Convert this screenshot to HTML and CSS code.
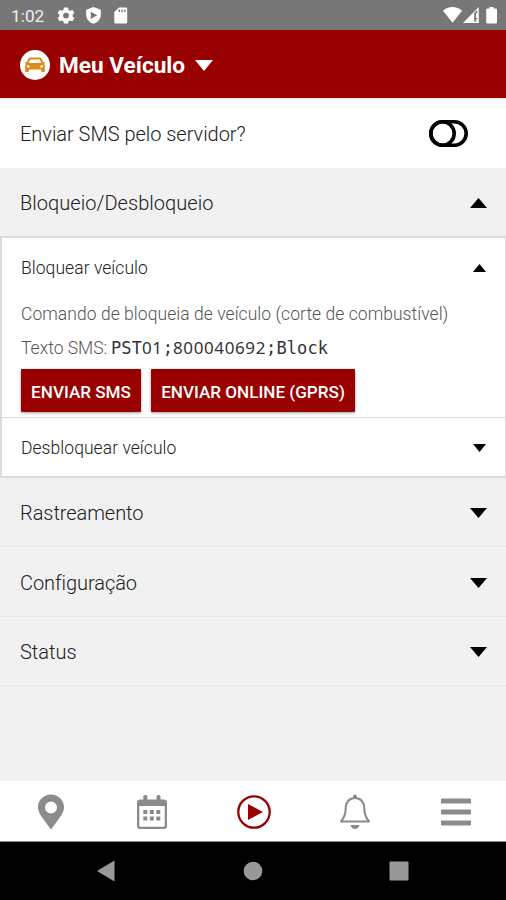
FILE: index.html
```html
<!DOCTYPE html>
<html lang="pt-BR">
<head>
<meta charset="utf-8">
<title>Meu Veículo</title>
<link rel="stylesheet" href="styles.css">
</head>
<body>
<div class="status-bar">
  <span class="time">1:02</span>
  <svg class="status-left" viewBox="0 0 75 30" width="75" height="30" fill="#fff">
    <path fill-rule="evenodd" d="M8 7.500h4l.6 2.400 1.500.9 2.400-.8 1.900 3.100-1.800 1.700v1.600l1.800 1.600-1.900 3.200-2.400-.8-1.500.9-.6 2.300H8l-.6-2.300-1.500-.9-2.400.8L1.600 18l1.800-1.600v-1.600l-1.800-1.700L3.500 10l2.400.8 1.500-.9zM10 12.700a2.900 2.900 0 1 0 0 5.800a2.900 2.900 0 1 0 0-5.800z"/>
    <path fill-rule="evenodd" d="M37.500 7l7.300 2.800v5.200c0 4.300-3.200 7.500-7.300 8.800c-4.100-1.300-7.300-4.500-7.300-8.800V9.800zM34.800 11.700v7.200l6.400-3.600z"/>
    <path fill-rule="evenodd" d="M63 7.500h7a1.200 1.200 0 0 1 1.200 1.200v13.600a1.200 1.200 0 0 1-1.200 1.200H59.500a1.200 1.200 0 0 1-1.200-1.200V12zM62.500 9.500v2.500H64v-2.500zM65.300 9.500v2.500h1.400v-2.500zM68.200 9.500v2.500h1.400v-2.500z"/>
  </svg>
  <svg class="status-right" viewBox="0 0 60 30" width="60" height="30" fill="#fff">
    <path d="M3 10.800c5-5 14-5 19 0L12.500 22.800z"/>
    <path fill-rule="evenodd" d="M38.800 7v16H23zM34.200 13v8.500h3V10z"/>
    <path d="M36 13h1.600v5H36zM36 19.500h1.600V21H36z"/>
    <path d="M49.500 7h4v1.500h2.200a1.300 1.300 0 0 1 1.300 1.300v12.400a1.300 1.300 0 0 1-1.300 1.300h-8.200a1.300 1.300 0 0 1-1.300-1.300V9.800a1.300 1.300 0 0 1 1.300-1.300h2z"/>
  </svg>
</div>
<header class="header">
  <svg class="avatar" viewBox="0 0 30 30" width="30" height="30">
    <circle cx="15" cy="15" r="15" fill="#fff"/>
    <path fill="#dc8d1b" fill-rule="evenodd" d="M10.500 7.500h9c1.300 0 2 .6 2.500 1.700l1.400 3.200 1.600-.6v1.300l-1 .7c.6.7.9 1.500.9 2.400v4.600c0 .9-.4 1.300-1.200 1.300h-1.200c-.9 0-1.400-.5-1.400-1.300v-1.300H8.900v1.300c0 .8-.5 1.300-1.400 1.300H6.300c-.8 0-1.200-.4-1.200-1.300v-4.600c0-.9.300-1.700.9-2.400l-1-.7v-1.300l1.600.6L8 9.200c.5-1.100 1.200-1.700 2.500-1.700zM10.800 9.500c-.6 0-.8.200-1 .7l-1.100 2.700h12.600l-1.100-2.700c-.2-.5-.4-.7-1-.7zM7 15v2.200l3 .4c0-1.500-1.200-2.600-3-2.600zM23 15v2.200l-3 .4c0-1.500 1.200-2.600 3-2.600z"/>
  </svg>
  <h1 class="title">Meu Veículo</h1>
  <svg class="title-caret" viewBox="0 0 18 11" width="18" height="11"><path fill="#fff" d="M0 0h18L9 11z"/></svg>
</header>
<main class="content">
  <div class="row setting">
    <span class="label-server">Enviar SMS pelo servidor?</span>
    <svg class="toggle" viewBox="0 0 39 27" width="39" height="27" fill="none" stroke="#000" stroke-width="3.600">
      <rect x="1.800" y="1.800" width="35.400" height="23.400" rx="11.700"/>
      <circle cx="13.500" cy="13.500" r="11.700"/>
    </svg>
  </div>
  <div class="row section open">
    <span class="label-block">Bloqueio/Desbloqueio</span>
    <svg viewBox="0 0 17 10" width="17" height="10"><path d="M0 10h17L8.500 0z"/></svg>
  </div>
  <div class="panel">
    <div class="command">
      <div class="command-head">
        <span class="label-lock">Bloquear veículo</span>
        <svg viewBox="0 0 13 8" width="13" height="8"><path d="M0 8h13L6.500 0z"/></svg>
      </div>
      <p class="description">Comando de bloqueia de veículo (corte de combustível)</p>
      <p class="sms"><span class="sms-label">Texto SMS:</span><code>PST<span class="digits">01</span>;<span class="digits">800040692</span>;Block</code></p>
      <div class="actions">
        <button class="btn btn-sms">ENVIAR SMS</button>
        <button class="btn btn-online">ENVIAR ONLINE (GPRS)</button>
      </div>
    </div>
    <div class="command-head last">
      <span class="label-unlock">Desbloquear veículo</span>
      <svg viewBox="0 0 13 8" width="13" height="8"><path d="M0 0h13L6.500 8z"/></svg>
    </div>
  </div>
  <div class="row section closed">
    <span class="label-track">Rastreamento</span>
    <svg viewBox="0 0 17 10" width="17" height="10"><path d="M0 0h17L8.500 10z"/></svg>
  </div>
  <div class="row section closed tall">
    <span class="label-config">Configuração</span>
    <svg viewBox="0 0 17 10" width="17" height="10"><path d="M0 0h17L8.500 10z"/></svg>
  </div>
  <div class="row section closed">
    <span class="label-status">Status</span>
    <svg viewBox="0 0 17 10" width="17" height="10"><path d="M0 0h17L8.500 10z"/></svg>
  </div>
</main>
<nav class="tabs">
  <svg viewBox="0 0 36 36" width="36" height="36"><path fill="#8b8b8b" fill-rule="evenodd" d="M18 .5c7.300 0 13 5.600 13 12.700c0 6.500-6.500 13-13 22.300C11.500 26.200 5 19.700 5 13.200C5 6.100 10.700.5 18 .5zM18 7.500a6 6 0 1 0 0 12a6 6 0 1 0 0-12z"/></svg>
  <svg viewBox="0 0 36 36" width="36" height="36" fill="#8b8b8b">
    <path fill-rule="evenodd" d="M6 5.500h24a3 3 0 0 1 3 3V32a3 3 0 0 1-3 3H6a3 3 0 0 1-3-3V8.500a3 3 0 0 1 3-3zM5.300 12v19.500c0 .8.400 1.200 1.200 1.200h23c.8 0 1.200-.4 1.200-1.200V12z"/>
    <rect x="9.300" y="1" width="4" height="6" rx="1.500"/><rect x="22.500" y="1" width="4" height="6" rx="1.500"/>
    <path d="M9.300 16h4v4h-4zM15.800 16h4v4h-4zM22.300 16h4v4h-4zM9.300 22.500h4v4h-4zM15.800 22.500h4v4h-4zM22.300 22.500h4v4h-4z"/>
  </svg>
  <svg viewBox="0 0 36 36" width="36" height="36"><circle cx="18" cy="18" r="15.700" fill="none" stroke="#900" stroke-width="2.300"/><path fill="#900" d="M12 10l15 8-15 8z"/></svg>
  <svg viewBox="0 0 36 36" width="36" height="36">
    <path fill="none" stroke="#8b8b8b" stroke-width="2.100" stroke-linejoin="round" d="M18 4c-6 0-9.300 4.500-9.300 10.200c0 7-2 10-4.700 13.300h28c-2.700-3.300-4.700-6.300-4.700-13.300C27.300 8.500 24 4 18 4z"/>
    <path fill="#8b8b8b" d="M16 4V2.500a2 2 0 0 1 4 0V4zM13.500 31h9c-.6 2.500-2.300 4-4.500 4s-3.900-1.500-4.500-4z"/>
  </svg>
  <svg viewBox="0 0 36 36" width="36" height="36" fill="#8b8b8b"><rect x="3" y="4.500" width="30" height="5" rx=".7"/><rect x="3" y="15.500" width="30" height="5" rx=".7"/><rect x="3" y="26.500" width="30" height="5" rx=".7"/></svg>
</nav>
<div class="system-nav">
  <svg viewBox="0 0 22 22" width="22" height="22"><path d="M2 11L19.500.5v21z"/></svg>
  <svg viewBox="0 0 22 22" width="22" height="22"><circle cx="11" cy="11" r="9.300"/></svg>
  <svg viewBox="0 0 22 22" width="22" height="22"><rect x="1.500" y="1.500" width="19" height="19" rx="1"/></svg>
</div>
</body>
</html>
```
FILE: styles.css
```css
* { box-sizing: border-box; }
body {
  margin: 0;
  width: 506px;
  height: 900px;
  display: flex;
  flex-direction: column;
  overflow: hidden;
  background: #f1f1f1;
  color: #202020;
  font-family: Roboto, "Liberation Sans", sans-serif;
}
svg { display: block; flex: none; }
h1, p { margin: 0; }
.status-bar {
  height: 30px;
  flex: none;
  display: flex;
  align-items: center;
  padding: 0 6px 0 11px;
  background: #777;
  color: #eee;
}
.time { width: 45px; font-size: 17.300px; line-height: 30px; padding-top: 2px; }
.status-right { margin-left: auto; }
.header {
  height: 68px;
  flex: none;
  display: flex;
  align-items: center;
  padding: 2px 20px 0;
  background: #900;
  color: #fff;
}
.title { margin-left: 9px; padding-top: 2px; font-size: 22.600px; font-weight: 700; line-height: 30px; white-space: nowrap; }
.title-caret { margin-left: 10px; }
.content { flex: 1; display: flex; flex-direction: column; }
.row {
  height: 69px;
  flex: none;
  display: flex;
  align-items: center;
  justify-content: space-between;
  padding: 0 19px 0 20px;
  font-size: 20px;
  font-weight: 300;
  white-space: nowrap;
}
.setting { height: 70px; padding: 0 38px 1px 20px; background: #fff; border-top: 2px solid #fff0f0; }
.section { border-bottom: 1px solid #e7e7e7; }
.section.open { height: 68px; border: 0; padding-top: 2px; }
.section.closed { padding-top: 2px; }
.section.tall { height: 70px; }
.label-server { letter-spacing: -.03px; }
.label-block { letter-spacing: .04px; }
.label-track, .label-config { letter-spacing: -.06px; }
.panel { height: 242px; flex: none; background: #fff; border: 2px solid #dcdcdc; border-width: 2px 1px 2px 2px; }
.command { height: 180px; border-bottom: 1px solid #dcdcdc; }
.command-head {
  height: 60px;
  display: flex;
  align-items: center;
  justify-content: space-between;
  padding: 0 19px 0 19px;
  font-size: 17.500px;
  font-weight: 300;
  letter-spacing: .05px;
}
.description, .sms { padding-left: 19px; height: 34px; line-height: 32px; font-size: 17.500px; font-weight: 300; color: #555; white-space: nowrap; }
.description { letter-spacing: .05px; }
.sms { display: flex; }
.sms-label { width: 90px; }
.sms code { font-family: "DejaVu Sans Mono", monospace; font-size: 17px; letter-spacing: .1px; color: #333; }
.digits { font-family: "Noto Sans", sans-serif; font-weight: 400; letter-spacing: .610px; }
.actions { display: flex; gap: 10px; padding: 3px 0 0 19px; }
.btn {
  height: 43px;
  padding: 2px 0 0;
  border: 0;
  border-radius: 1px;
  background: #900;
  color: #fff;
  box-shadow: 0 1px 3px #0006;
  font: 500 17.100px Roboto, sans-serif;
  white-space: nowrap;
}
.btn-sms { width: 120px; }
.btn-online { width: 204px; }
.tabs {
  height: 61px;
  flex: none;
  display: flex;
  justify-content: space-between;
  align-items: center;
  padding: 1px 32px 0 33px;
  background: #fff;
  border-bottom: 1px solid #888;
}
.system-nav {
  height: 58px;
  flex: none;
  display: flex;
  align-items: center;
  justify-content: space-between;
  padding: 0 96px 0 95px;
  background: #000;
  fill: #999;
}
```
